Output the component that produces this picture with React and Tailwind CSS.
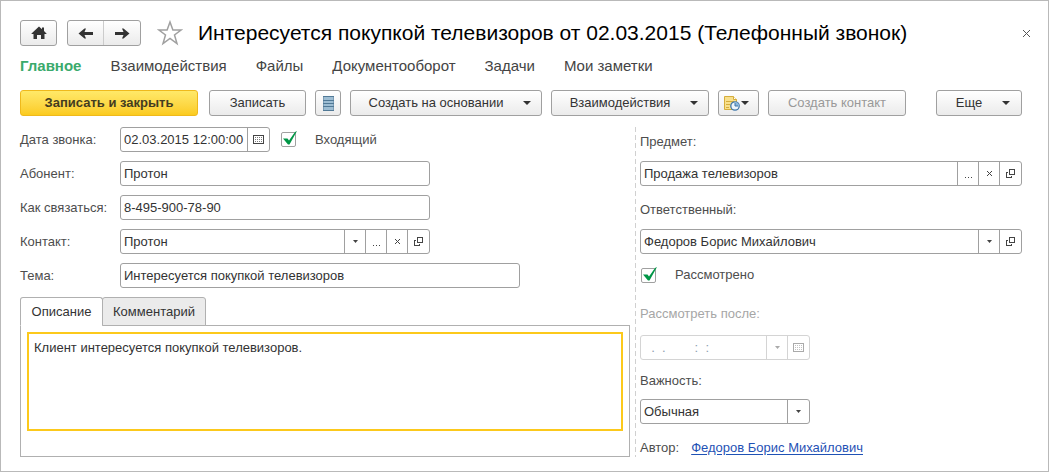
import { useState } from 'react';

const ArrowIcon = ({ className = '' }) => (
    <svg width="15" height="13" viewBox="0 0 15 13" className={className} aria-hidden="true">
        <path d="M0 5h8.500L7 1.500h1.500L14.500 6.500 8.500 11.500H7L8.500 8H0z" fill="#333" />
    </svg>
);

const HomeIcon = () => (
    <svg width="16" height="14" viewBox="0 0 16 14" aria-hidden="true">
        <path d="M8 0.500l3 2.700V1.500h2v3.500L15.500 7.500V8H13.500V13H10V9H6v4H2.500V8H0.500V7.500z" fill="#333" />
    </svg>
);

const StarIcon = () => (
    <svg width="26" height="26" viewBox="0 0 26 26" aria-hidden="true">
        <path
            d="M13 2l2.900 8h8.100l-6.500 5 2.500 8.500L13 18.400 6 23.500 8.500 15 2 10h8.100z"
            fill="#fff"
            stroke="#a0a0a0"
            strokeWidth="1.500"
        />
    </svg>
);

const ListIcon = () => (
    <svg width="11" height="15" viewBox="0 0 11 15" aria-hidden="true">
        <rect x="0.500" y="0.500" width="10" height="14" fill="#9dbdd3" stroke="#7c9db6" />
        <path d="M0 0.500h11M0 4.500h11M0 7.500h11M0 10.500h11M0 14.500h11" stroke="#517996" />
    </svg>
);

const NoteClockIcon = () => (
    <svg width="16" height="16" viewBox="0 0 16 16" aria-hidden="true">
        <path d="M0.500 1.500h9l3 3v10h-12z" fill="#f8e08c" stroke="#d5ad3c" />
        <path d="M9.500 1.500v3h3" fill="#fff" stroke="#d5ad3c" />
        <path d="M2 6.500h8M2 9.500h4M2 12.500h3" stroke="#d5ad3c" />
        <circle cx="11" cy="11" r="4.200" fill="#eef5fb" stroke="#3f76a8" strokeWidth="1.300" />
        <path d="M11 7v4h4A4 4 0 0 0 11 7z" fill="#8db8dc" />
        <path d="M11 8v3h3" fill="none" stroke="#3f76a8" />
    </svg>
);

const CalendarIcon = () => (
    <svg width="11" height="9" viewBox="0 0 11 9" shapeRendering="crispEdges" aria-hidden="true">
        <path d="M0.500 0.500h10v8h-10z" fill="none" stroke="currentColor" />
        <path d="M2 2.500h7M2 4.500h7M2 6.500h7" stroke="currentColor" strokeOpacity="0.700" strokeDasharray="1 1" />
    </svg>
);

const Caret = () => (
    <svg width="5" height="3" viewBox="0 0 5 3" aria-hidden="true">
        <path d="M0 0h5L2.500 3z" fill="currentColor" />
    </svg>
);

const BigCaret = () => (
    <svg width="8" height="4" viewBox="0 0 8 4" aria-hidden="true">
        <path d="M0 0h8L4 4z" fill="#333" />
    </svg>
);

const CrossIcon = ({ size = 5 }) => (
    <svg width={size} height={size} viewBox={`0 0 ${size} ${size}`} aria-hidden="true">
        <path d={`M0 0L${size} ${size}M${size} 0L0 ${size}`} stroke="currentColor" />
    </svg>
);

const DotsIcon = () => (
    <svg width="7" height="9" viewBox="0 0 7 9" shapeRendering="crispEdges" aria-hidden="true">
        <path d="M0 8.500h7" stroke="currentColor" strokeDasharray="1 2" />
    </svg>
);

const OpenIcon = () => (
    <svg width="9" height="9" viewBox="0 0 9 9" shapeRendering="crispEdges" aria-hidden="true">
        <path d="M3.500 0.500h5v5h-5zM2 3.500H0.500v5h5V7" fill="none" stroke="currentColor" />
    </svg>
);

const ICONS = {
    list: { label: 'Выбрать из списка', icon: <Caret /> },
    choose: { label: 'Выбрать', icon: <DotsIcon /> },
    clear: { label: 'Очистить', icon: <CrossIcon /> },
    open: { label: 'Открыть', icon: <OpenIcon /> },
    calendar: { label: 'Календарь', icon: <CalendarIcon /> },
};

const Field = ({ id, value, actions = [], disabled = false, className = '' }) => {
    const [text, setText] = useState(value);
    const border = disabled ? 'border-[#d4d4d4]' : 'border-[#a0a0a0]';

    return (
        <div className={`flex h-[25px] rounded-[3px] border bg-white ${border} ${className}`}>
            <input
                id={id}
                type="text"
                value={text}
                disabled={disabled}
                onChange={(e) => setText(e.target.value)}
                className="w-full min-w-0 flex-1 bg-transparent px-[3px] text-[#333] outline-none disabled:text-[#8d9db0]"
            />
            {actions.map((name) => (
                <button
                    key={name}
                    type="button"
                    aria-label={ICONS[name].label}
                    disabled={disabled}
                    className={`flex w-[21px] shrink-0 items-center justify-center border-l text-[#444] last:w-[22px] disabled:text-[#aaa] ${border}`}
                >
                    {ICONS[name].icon}
                </button>
            ))}
        </div>
    );
};

const Row = ({ id, label, children }) => (
    <div className="flex items-center">
        <label htmlFor={id} className="w-[100px] shrink-0 whitespace-nowrap">{label}</label>
        {children}
    </div>
);

const CheckBox = ({ label }) => (
    <label className="flex items-center gap-[19px]">
        <span className="relative flex">
            <input
                type="checkbox"
                defaultChecked
                className="peer size-[15px] appearance-none rounded-[2px] border border-[#a0a0a0] bg-white"
            />
            <svg
                width="16"
                height="16"
                viewBox="0 0 16 16"
                className="pointer-events-none absolute bottom-0 left-0 hidden peer-checked:block"
                aria-hidden="true"
            >
                <path d="M2 7.500h4.500l1.500 2L14 1l2-1L8.500 13.500H7z" fill="#009646" />
            </svg>
        </span>
        {label}
    </label>
);

const ToolButton = ({ children, className = '', ...props }) => (
    <button
        type="button"
        className={`flex h-[26px] shrink-0 items-center justify-center rounded-[3px] border border-[#a0a0a0] bg-linear-to-b from-white to-[#ebebeb] text-[#333] disabled:text-[#999] ${className}`}
        {...props}
    >
        {children}
    </button>
);

const NAV = ['Взаимодействия', 'Файлы', 'Документооборот', 'Задачи', 'Мои заметки'];

const App = () => {
    const [tab, setTab] = useState('description');
    const [description, setDescription] = useState('Клиент интересуется покупкой телевизоров.');
    const [comment, setComment] = useState('');
    const isDescription = tab === 'description';

    return (
        <div className="border border-[#b9b9b9] bg-white pr-[26px] pb-[14px] pl-[19px] pt-[19px] font-['Liberation_Sans',Arial,sans-serif] text-[13px] leading-4 text-[#4d4d4d]">
            <header className="flex h-[26px] items-center">
                <ToolButton className="w-[37px]" aria-label="Главная">
                    <HomeIcon />
                </ToolButton>
                <div className="ml-[10px] flex h-[26px] shrink-0 divide-x divide-[#ccc] rounded-[3px] border border-[#a0a0a0] bg-linear-to-b from-white to-[#ebebeb]">
                    <button type="button" aria-label="Назад" className="flex w-9 items-center justify-center">
                        <ArrowIcon className="rotate-180" />
                    </button>
                    <button type="button" aria-label="Вперед" className="flex w-9 items-center justify-center">
                        <ArrowIcon />
                    </button>
                </div>
                <button type="button" aria-label="В избранное" className="ml-4 shrink-0">
                    <StarIcon />
                </button>
                <h1 className="ml-[15px] flex-1 text-[21px] leading-6 whitespace-nowrap text-black">
                    Интересуется покупкой телевизоров от 02.03.2015 (Телефонный звонок)
                </h1>
                <button type="button" aria-label="Закрыть" className="-mr-2 text-[#555]">
                    <CrossIcon size={7} />
                </button>
            </header>

            <nav className="mt-[10px] flex items-center gap-[29px] text-[15px] leading-5 text-[#444]">
                <a href="#main" className="font-bold text-[#3aaa6c]">Главное</a>
                {NAV.map((item) => (
                    <a key={item} href="#section">{item}</a>
                ))}
            </nav>

            <div className="mt-[14px] flex gap-[9px]">
                <button
                    type="button"
                    className="mr-[2px] h-[26px] w-[178px] shrink-0 rounded-[3px] border border-[#efb91c] bg-linear-to-b from-[#ffe968] to-[#fbcb1c] font-bold text-[#443c20]"
                >
                    Записать и закрыть
                </button>
                <ToolButton className="w-[97px]">Записать</ToolButton>
                <ToolButton className="w-[26px]" aria-label="Список">
                    <ListIcon />
                </ToolButton>
                <ToolButton className="w-[192px] gap-5 pl-2">Создать на основании <BigCaret /></ToolButton>
                <ToolButton className="w-[158px] gap-5 pl-2">Взаимодействия <BigCaret /></ToolButton>
                <ToolButton className="w-[41px] gap-px pr-1" aria-label="Напоминание">
                    <NoteClockIcon />
                    <BigCaret />
                </ToolButton>
                <ToolButton className="w-[138px]" disabled>Создать контакт</ToolButton>
                <ToolButton className="ml-auto w-[86px] gap-5 pl-2">Еще <BigCaret /></ToolButton>
            </div>

            <div className="mt-[11px] grid grid-cols-[610fr_387fr] gap-[5px]">
                <div className="flex flex-col gap-[9px]">
                    <Row id="date" label="Дата звонка:">
                        <Field id="date" value="02.03.2015 12:00:00" actions={['calendar']} className="mr-[11px] w-[150px]" />
                        <CheckBox label="Входящий" />
                    </Row>
                    <Row id="caller" label="Абонент:">
                        <Field id="caller" value="Протон" className="w-[310px]" />
                    </Row>
                    <Row id="phone" label="Как связаться:">
                        <Field id="phone" value="8-495-900-78-90" className="w-[310px]" />
                    </Row>
                    <Row id="contact" label="Контакт:">
                        <Field id="contact" value="Протон" actions={['list', 'choose', 'clear', 'open']} className="w-[310px]" />
                    </Row>
                    <Row id="subject" label="Тема:">
                        <Field id="subject" value="Интересуется покупкой телевизоров" className="w-[400px]" />
                    </Row>

                    <div className="flex flex-1 flex-col">
                        <div role="tablist" className="flex">
                            <button
                                type="button"
                                role="tab"
                                aria-selected={isDescription}
                                onClick={() => setTab('description')}
                                className="z-10 -mb-px h-[29px] w-[83px] rounded-t-[3px] border border-[#b0b0b0] bg-[#ebebeb] text-[#333] aria-selected:border-b-white aria-selected:bg-white"
                            >
                                Описание
                            </button>
                            <button
                                type="button"
                                role="tab"
                                aria-selected={!isDescription}
                                onClick={() => setTab('comment')}
                                className="z-10 -mb-px -ml-px h-[29px] w-[104px] rounded-t-[3px] border border-[#b0b0b0] bg-[#ebebeb] text-[#333] aria-selected:border-b-white aria-selected:bg-white"
                            >
                                Комментарий
                            </button>
                        </div>
                        <div className="flex-1 border border-[#b0b0b0] px-[6px] pt-[6px] pb-[25px]">
                            <textarea
                                aria-label={isDescription ? 'Описание' : 'Комментарий'}
                                value={isDescription ? description : comment}
                                onChange={(e) => (isDescription ? setDescription(e.target.value) : setComment(e.target.value))}
                                className="block h-[99px] w-full resize-none border-2 border-[#fcc91b] px-[5px] py-[6px] text-[#333] outline-none"
                            />
                        </div>
                    </div>
                </div>

                <div className="flex flex-col bg-[repeating-linear-gradient(to_bottom,#d0d0d0_0_5px,transparent_5px_8px)] bg-[length:1px_100%] bg-no-repeat pl-[5px]">
                    <label htmlFor="topic" className="mt-[7px]">Предмет:</label>
                    <Field id="topic" value="Продажа телевизоров" actions={['choose', 'clear', 'open']} className="mt-[11px]" />
                    <label htmlFor="owner" className="mt-4">Ответственный:</label>
                    <Field id="owner" value="Федоров Борис Михайлович" actions={['list', 'open']} className="mt-[11px]" />
                    <div className="mt-[13px] pl-px">
                        <CheckBox label="Рассмотрено" />
                    </div>
                    <label htmlFor="after" className="mt-[23px] text-[#a6a6a6]">Рассмотреть после:</label>
                    <Field id="after" value="  .  .        :  :" actions={['list', 'calendar']} disabled className="mt-[13px] w-[170px]" />
                    <label htmlFor="priority" className="mt-[13px]">Важность:</label>
                    <div className="relative mt-[10px] w-[170px]">
                        <select
                            id="priority"
                            defaultValue="normal"
                            className="block h-[25px] w-full appearance-none rounded-[3px] border border-[#a0a0a0] bg-white px-[3px] text-[#333] outline-none"
                        >
                            <option value="low">Низкая</option>
                            <option value="normal">Обычная</option>
                            <option value="high">Высокая</option>
                        </select>
                        <span className="pointer-events-none absolute inset-y-px right-px flex w-[22px] items-center justify-center border-l border-[#a0a0a0] text-[#444]">
                            <Caret />
                        </span>
                    </div>
                    <div className="mt-4 flex gap-3">
                        <span>Автор:</span>
                        <a href="#author" className="text-[#1f52b5] underline underline-offset-2">Федоров Борис Михайлович</a>
                    </div>
                </div>
            </div>
        </div>
    );
};

export default App;
